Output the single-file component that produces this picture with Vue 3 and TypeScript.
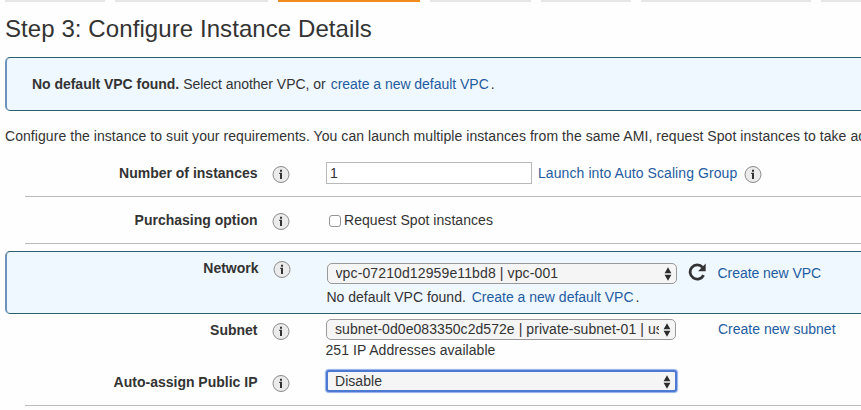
<script setup lang="ts">
import { h, ref, type FunctionalComponent } from 'vue'

interface WizardTab {
  width: number
  active: boolean
}

const tabs: WizardTab[] = [
  { width: 100, active: false },
  { width: 153, active: false },
  { width: 142, active: true },
  { width: 101, active: false },
  { width: 90, active: false },
  { width: 170, active: false },
  { width: 60, active: false },
]

const instanceCount = ref('1')
const requestSpot = ref(false)

const InfoIcon: FunctionalComponent = () =>
  h('svg', { width: 18, height: 18, viewBox: '0 0 18 18' }, [
    h('circle', { cx: 9, cy: 8.5, r: 8, fill: '#ebebeb', stroke: '#8b8b8b', 'stroke-width': 1 }),
    h('path', { d: 'M8 3.8h2v2H8zM7.2 6.8H10v6.2H8V7.9h-.8z', fill: '#333' }),
  ])

const SelectArrows: FunctionalComponent = () =>
  h('svg', { width: 8, height: 14, viewBox: '0 0 8 14' }, [
    h('path', { d: 'M4 .2 7.4 6.2H.6zM4 13.8.6 7.8h6.8z', fill: '#2c2c2c' }),
  ])
</script>

<template>
  <main class="page">
    <nav class="tabs">
      <span
        v-for="(tab, i) in tabs"
        :key="i"
        class="tab"
        :class="{ active: tab.active }"
        :style="{ width: tab.width + 'px' }"
      ></span>
    </nav>
    <h1>Step 3: Configure Instance Details</h1>

    <section class="alert">
      <strong>No default VPC found.</strong>
      <span class="alert-text">Select another VPC, or</span>
      <a class="alert-link">create a new default VPC</a><span class="dot">.</span>
    </section>

    <p class="intro">Configure the instance to suit your requirements. You can launch multiple instances from the same AMI, request Spot instances to take ad</p>

    <section class="row count">
      <label class="label">Number of instances</label>
      <InfoIcon class="info" />
      <div class="field inline">
        <input v-model="instanceCount" class="number" type="text" />
        <a class="scaling">Launch into Auto Scaling Group</a>
        <InfoIcon class="info scaling-info" />
      </div>
    </section>

    <section class="row purchasing">
      <label class="label">Purchasing option</label>
      <InfoIcon class="info" />
      <label class="field inline spot">
        <input v-model="requestSpot" class="check" type="checkbox" />
        <span>Request Spot instances</span>
      </label>
    </section>

    <section class="row network">
      <label class="label">Network</label>
      <InfoIcon class="info" />
      <div class="field">
        <div class="inline">
          <div class="select"><span class="value vpc">vpc-07210d12959e11bd8 | vpc-001</span><SelectArrows class="arrows" /></div>
          <svg class="refresh" width="18" height="18" viewBox="0 0 18 18">
            <path d="M15.6 12.1A7.1 7.1 0 1 1 14.6 4.4" fill="none" stroke="#333" stroke-width="2.8" />
            <path d="M17.7.6v7.6h-7.6z" fill="#333" />
          </svg>
          <a class="create-vpc">Create new VPC</a>
        </div>
        <div class="note">No default VPC found. <a class="note-link">Create a new default VPC</a><span class="dot">.</span></div>
      </div>
    </section>

    <section class="row subnet">
      <label class="label">Subnet</label>
      <InfoIcon class="info" />
      <div class="field">
        <div class="inline">
          <div class="select"><span class="value sub">subnet-0d0e083350c2d572e | private-subnet-01 | us</span><SelectArrows class="arrows" /></div>
          <a class="create-subnet">Create new subnet</a>
        </div>
        <div class="hint">251 IP Addresses available</div>
      </div>
    </section>

    <section class="row public-ip">
      <label class="label">Auto-assign Public IP</label>
      <InfoIcon class="info" />
      <div class="field">
        <div class="select focused"><span class="value">Disable</span><SelectArrows class="arrows" /></div>
      </div>
    </section>
  </main>
</template>

<style>
body {
  background: #fefefe;
  overflow: hidden;
}
</style>

<style scoped>
.page {
  width: 861px;
  height: 410px;
  overflow: hidden;
  box-sizing: border-box;
  font: 14px/16px 'Liberation Sans', Arial, sans-serif;
  letter-spacing: 0.05px;
  color: #333;
  white-space: nowrap;
}
.tabs {
  display: flex;
  gap: 10px;
  height: 2px;
  padding-left: 5px;
}
.tab {
  flex: none;
  background: #e6e6e6;
}
.tab.active {
  background: #ef8c1c;
}
h1 {
  margin: 0;
  height: 55px;
  padding: 13px 0 0 5px;
  box-sizing: border-box;
  font-size: 24px;
  line-height: 28px;
  font-weight: 400;
  letter-spacing: 0.08px;
}
a {
  color: #1f5ca0;
}
.alert,
.network {
  box-sizing: border-box;
  border: 1px solid #29606f;
  border-left: 2px solid #6d93b8;
  border-right: 0;
  border-radius: 5px 0 0 5px;
  background: #f0f8ff;
}
.alert {
  display: flex;
  height: 54px;
  margin-left: 5px;
  padding: 18px 0 0 25px;
  letter-spacing: -0.03px;
}
.alert-text {
  margin-left: 4px;
}
.alert-link {
  margin-left: 5px;
}
.dot {
  margin-left: 2px;
}
.intro {
  margin: 0;
  height: 39px;
  padding: 17px 0 0 5px;
  box-sizing: border-box;
  letter-spacing: 0.06px;
}
.row {
  display: grid;
  grid-template-columns: 232px 18px 1fr;
  align-items: start;
  margin-left: 25px;
  box-sizing: border-box;
}
.label {
  text-align: right;
  font-weight: 700;
  letter-spacing: 0;
  margin-right: -0.5px;
}
.info {
  display: block;
  margin-left: 15px;
  margin-top: 1px;
}
.field {
  margin-left: 51px;
}
.inline {
  display: flex;
  align-items: flex-start;
}
.count {
  height: 47px;
  padding-top: 15px;
  border-bottom: 1px solid #bbb;
}
.number {
  width: 206px;
  height: 22px;
  margin: -3px 0 0;
  box-sizing: border-box;
  padding: 0 3px;
  border: 1px solid #b9b9b9;
  border-radius: 0;
  background: #fff;
  color: #333;
  font: inherit;
  letter-spacing: inherit;
}
.scaling {
  margin-left: 6px;
  letter-spacing: 0.08px;
}
.scaling-info {
  margin-left: 7px;
}
.purchasing {
  height: 47px;
  padding-top: 15px;
  border-bottom: 1px solid #bbb;
}
.check {
  appearance: none;
  width: 12px;
  height: 12px;
  margin: 3px 3px 0 3px;
  box-sizing: border-box;
  border: 1px solid #959595;
  border-radius: 3px;
  background: #fff;
}
.network {
  height: 63px;
  margin: 7px 0 0 5px;
  padding-top: 8px;
  grid-template-columns: 251px 18px 1fr;
}
.network .field {
  margin-left: 50.5px;
}
.select {
  display: flex;
  align-items: flex-start;
  width: 350px;
  height: 21px;
  box-sizing: border-box;
  padding: 1px 4px 0 8px;
  border: 1px solid #999;
  border-radius: 5px;
  background: #f5f5f5;
}
.value {
  flex: 1;
  min-width: 0;
  overflow: hidden;
}
.vpc {
  letter-spacing: 0.12px;
}
.sub {
  letter-spacing: 0.06px;
}
.arrows {
  flex: none;
  margin: 2px 0 0 4px;
}
.network .select {
  margin-top: 3px;
}
.refresh {
  flex: none;
  margin: 3px 0 0 11px;
}
.create-vpc {
  margin: 5px 0 0 12px;
  letter-spacing: -0.05px;
}
.note {
  margin-top: 5px;
  letter-spacing: 0;
}
.note-link {
  margin-left: 2px;
}
.subnet {
  height: 48px;
  padding-top: 8px;
}
.subnet .select {
  margin-top: -3px;
}
.create-subnet {
  margin: -1px 0 0 42px;
  letter-spacing: 0;
}
.hint {
  margin-top: 2px;
  margin-left: -0.5px;
}
.public-ip {
  height: 44px;
  padding-top: 12px;
  border-bottom: 1px solid #bbb;
}
.focused {
  width: 351px;
  height: 22px;
  margin: -4px 0 0 0;
  border: 2px solid #4d79d2;
  border-radius: 3px;
  box-shadow: 0 0 1px 1px #93b0ea;
}
.focused .value {
  margin-left: -1px;
}
</style>
